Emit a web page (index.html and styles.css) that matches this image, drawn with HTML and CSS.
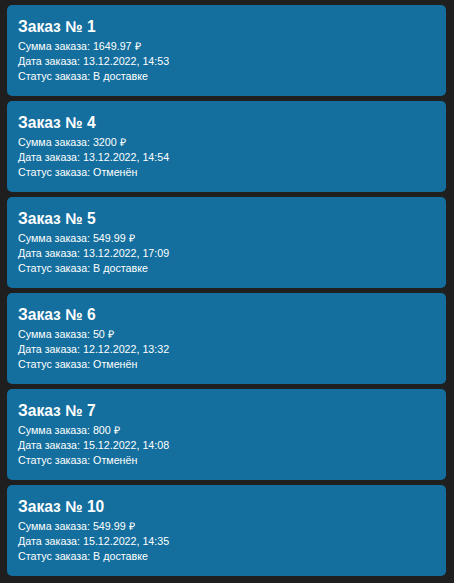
FILE: index.html
```html
<!DOCTYPE html>
<html lang="ru">
<head>
<meta charset="utf-8">
<link rel="stylesheet" href="styles.css">
</head>
<body>
<div class="orders">
  <div class="card">
    <h2 class="title">Заказ № 1</h2>
    <p class="line">Сумма заказа: 1649.97 ₽</p>
    <p class="line">Дата заказа: 13.12.2022, 14:53</p>
    <p class="line">Статус заказа: В доставке</p>
  </div>
  <div class="card">
    <h2 class="title">Заказ № 4</h2>
    <p class="line">Сумма заказа: 3200 ₽</p>
    <p class="line">Дата заказа: 13.12.2022, 14:54</p>
    <p class="line">Статус заказа: Отменён</p>
  </div>
  <div class="card">
    <h2 class="title">Заказ № 5</h2>
    <p class="line">Сумма заказа: 549.99 ₽</p>
    <p class="line">Дата заказа: 13.12.2022, 17:09</p>
    <p class="line">Статус заказа: В доставке</p>
  </div>
  <div class="card">
    <h2 class="title">Заказ № 6</h2>
    <p class="line">Сумма заказа: 50 ₽</p>
    <p class="line">Дата заказа: 12.12.2022, 13:32</p>
    <p class="line">Статус заказа: Отменён</p>
  </div>
  <div class="card">
    <h2 class="title">Заказ № 7</h2>
    <p class="line">Сумма заказа: 800 ₽</p>
    <p class="line">Дата заказа: 15.12.2022, 14:08</p>
    <p class="line">Статус заказа: Отменён</p>
  </div>
  <div class="card">
    <h2 class="title">Заказ № 10</h2>
    <p class="line">Сумма заказа: 549.99 ₽</p>
    <p class="line">Дата заказа: 15.12.2022, 14:35</p>
    <p class="line">Статус заказа: В доставке</p>
  </div>
</div>
</body>
</html>
```

FILE: styles.css
```css
html, body {
  margin: 0;
  padding: 0;
  background: #1f1f1f;
  font-family: "Liberation Sans", Arial, sans-serif;
  color: #ffffff;
}
.orders {
  display: flex;
  flex-direction: column;
  gap: 5px;
  padding: 5px 8px 5px 7px;
}
.card {
  background: #146f9e;
  border-radius: 5px;
  padding: 12px 11px 12px 11px;
}
.title {
  margin: 0 0 3px 0;
  font-size: 15.6px;
  line-height: 19px;
  font-weight: bold;
}
.line {
  margin: 0;
  font-size: 10.7px;
  line-height: 15px;
}
```
